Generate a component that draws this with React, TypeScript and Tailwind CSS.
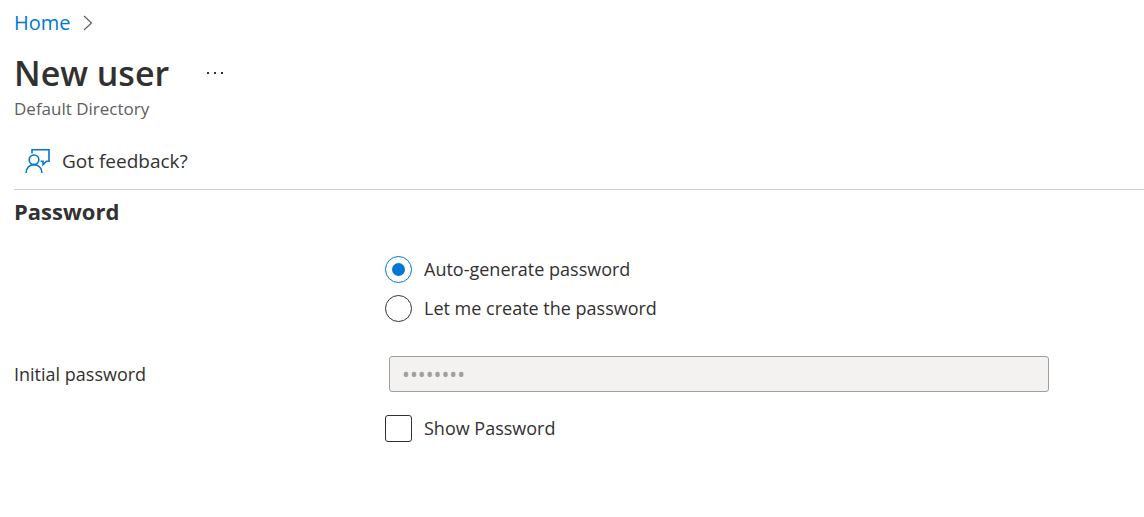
import { useState } from "react";

function FeedbackIcon() {
  return (
    <svg
      width="26"
      height="26"
      viewBox="0 0 26 26"
      fill="none"
      stroke="#0078d4"
      strokeWidth="1.6"
      aria-hidden="true"
    >
      <path d="M7 5.4V1.8h17v11.4h-2.4L18 16.6v-3.4h-2.4" />
      <circle cx="9" cy="11.8" r="4.8" />
      <path d="M1 25c0-4.9 3.4-8.4 8-8.4s8 3.5 8 8.4" />
    </svg>
  );
}

function Chevron() {
  return (
    <svg
      width="10"
      height="16"
      viewBox="0 0 10 16"
      fill="none"
      stroke="#605e5c"
      strokeWidth="1.2"
      aria-hidden="true"
    >
      <path d="M1 1l7.5 7L1 15" />
    </svg>
  );
}

type RadioProps = {
  id: string;
  label: string;
  checked: boolean;
  onSelect: () => void;
};

function RadioOption({ id, label, checked, onSelect }: RadioProps) {
  return (
    <div className="flex items-center gap-3">
      <input
        id={id}
        type="radio"
        name="password-mode"
        checked={checked}
        onChange={onSelect}
        className="grid size-[27px] shrink-0 appearance-none place-content-center rounded-full border border-[#323130] bg-white before:size-[13px] before:rounded-full checked:border-[#0078d4] checked:before:bg-[#0078d4]"
      />
      <label htmlFor={id} className="text-[18px] leading-[27px]">
        {label}
      </label>
    </div>
  );
}

export default function App() {
  const [auto, setAuto] = useState(true);
  const [show, setShow] = useState(false);
  const [password, setPassword] = useState("Passw0rd");

  return (
    <main className="bg-white pl-3.5 font-['Open_Sans','Noto_Sans',sans-serif] text-[#323130]">
      <nav aria-label="Breadcrumb" className="flex h-[46px] items-center gap-3">
        <a href="#home" className="text-[20px] leading-6 text-[#0078d4]">
          Home
        </a>
        <Chevron />
      </nav>

      <header className="pt-1">
        <div className="flex items-center gap-9">
          <h1 className="text-[34px] leading-[46px] font-semibold">New user</h1>
          <button type="button" aria-label="More actions" className="flex p-0">
            <svg width="20" height="4" viewBox="0 0 20 4" fill="#323130" aria-hidden="true">
              <rect x="2" y="1" width="2" height="2" />
              <rect x="9" y="1" width="2" height="2" />
              <rect x="16" y="1" width="2" height="2" />
            </svg>
          </button>
        </div>
        <p className="text-[17px] leading-[26px] text-[#605e5c]">Default Directory</p>
      </header>

      <div className="mt-2.5 flex h-[58px] items-center border-b border-[#d2d0ce] pl-[11px]">
        <button type="button" className="flex items-center gap-[11px] text-[19px] leading-6">
          <FeedbackIcon />
          Got feedback?
        </button>
      </div>

      <form onSubmit={(e) => e.preventDefault()}>
        <h2 className="text-[22px] leading-[42px] font-bold">Password</h2>

        <div
          role="radiogroup"
          aria-label="Password"
          className="mt-6 ml-[371px] flex flex-col gap-3"
        >
          <RadioOption
            id="auto-generate"
            label="Auto-generate password"
            checked={auto}
            onSelect={() => setAuto(true)}
          />
          <RadioOption
            id="create-own"
            label="Let me create the password"
            checked={!auto}
            onSelect={() => setAuto(false)}
          />
        </div>

        <div className="mt-[34px] flex items-center pr-[95px]">
          <label htmlFor="initial-password" className="w-[375px] shrink-0 text-[18px] leading-[27px]">
            Initial password
          </label>
          <input
            id="initial-password"
            type={show ? "text" : "password"}
            value={password}
            onChange={(e) => setPassword(e.target.value)}
            disabled={auto}
            className="h-9 min-w-0 flex-1 rounded-[3px] border border-[#a19f9d] bg-[#f3f2f1] px-3 text-[21px] text-[#a19f9d]"
          />
        </div>

        <div className="mt-[23px] ml-[371px] flex items-center gap-3">
          <input
            id="show-password"
            type="checkbox"
            checked={show}
            onChange={(e) => setShow(e.target.checked)}
            className="size-[27px] shrink-0 appearance-none rounded-[3px] border border-[#323130] bg-white checked:bg-[#0078d4]"
          />
          <label htmlFor="show-password" className="text-[18px] leading-[27px]">
            Show Password
          </label>
        </div>
      </form>
    </main>
  );
}
